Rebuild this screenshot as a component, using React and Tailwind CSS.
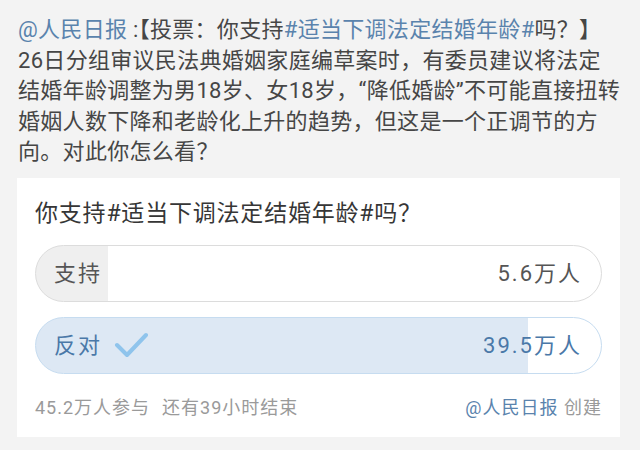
import React from "react";

const poll = {
  total: "45.2万人参与",
  left: "还有39小时结束",
  options: [
    { label: "支持", count: "5.6万人", pct: 12.7, voted: false },
    { label: "反对", count: "39.5万人", pct: 87, voted: true },
  ],
};

function CheckMark() {
  return (
    <svg width="34" height="26" viewBox="0 0 34 26" fill="none" className="ml-[12px]">
      <path d="M3 13 L13 23 L32 3" stroke="#8fc4ec" strokeWidth="4" strokeLinecap="round" strokeLinejoin="round" />
    </svg>
  );
}

function Option({ opt }) {
  const fill = opt.voted ? "#dde8f4" : "#efefef";
  return (
    <div
      className={
        "h-[57px] rounded-full border flex items-center pl-[18px] pr-[19px] text-[22px] tracking-[2px] " +
        (opt.voted ? "border-[#c6dcf0] text-[#4a78a8]" : "border-[#dcdcdc] text-[#555]")
      }
      style={{ background: `linear-gradient(to right, ${fill} ${opt.pct}%, #fff ${opt.pct}%)` }}
    >
      <span>{opt.label}</span>
      {opt.voted && <CheckMark />}
      <span className="ml-auto">{opt.count}</span>
    </div>
  );
}

export default function App() {
  return (
    <div className="w-[640px] h-[450px] bg-[#f3f3f3] overflow-hidden font-['Roboto','Noto_Sans_CJK_SC',sans-serif]">
      <div className="pl-[18px] pt-[15px] text-[22px] leading-[30.5px] tracking-[0.3px] text-[#464646] whitespace-nowrap">
        <div>
          <span className="text-[#5a83ad]">@人民日报</span> :
          <span className="[font-feature-settings:'halt']">【</span>投票：你支持
          <span className="text-[#5a83ad]">#适当下调法定结婚年龄#</span>吗？
          <span className="[font-feature-settings:'halt']">】</span>
        </div>
        <div>26日分组审议民法典婚姻家庭编草案时，有委员建议将法定</div>
        <div>结婚年龄调整为男18岁、女18岁，“降低婚龄”不可能直接扭转</div>
        <div>婚姻人数下降和老龄化上升的趋势，但这是一个正调节的方</div>
        <div>向。对此你怎么看？</div>
      </div>

      <div className="ml-[17px] mr-[20px] mt-[10px] bg-white px-[18px] pt-[22px] pb-[17px]">
        <div className="text-[23px] leading-[28px] tracking-[0.8px] text-[#363636]">
          你支持#适当下调法定结婚年龄#吗？
        </div>
        <div className="mt-[17px] flex flex-col gap-[15px]">
          {poll.options.map((o) => (
            <Option key={o.label} opt={o} />
          ))}
        </div>
        <div className="mt-[22px] flex items-center text-[18px] leading-[24px] tracking-[1px] text-[#9a9a9a]">
          <span>{poll.total}</span>
          <span className="ml-[12px]">{poll.left}</span>
          <span className="ml-auto">
            <span className="text-[#5a83ad]">@人民日报</span> 创建
          </span>
        </div>
      </div>
    </div>
  );
}
